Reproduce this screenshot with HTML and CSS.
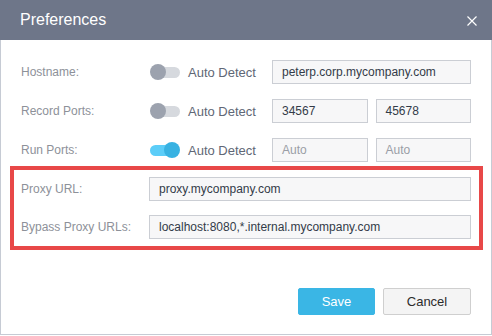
FILE: index.html
```html
<!DOCTYPE html>
<html>
<head>
<meta charset="utf-8">
<link rel="stylesheet" href="styles.css">
</head>
<body>
<div class="dialog">
  <div class="header">
    <span class="title">Preferences</span>
    <span class="close"><svg width="10" height="10" viewBox="0 0 10 10"><path d="M0.5 0.5L9.5 9.5M9.5 0.5L0.5 9.5" stroke="#fff" stroke-width="1.2" fill="none"/></svg></span>
  </div>
  <div class="body">
    <div class="row">
      <span class="label">Hostname:</span>
      <span class="toggle"><span class="track"></span><span class="knob"></span></span>
      <span class="auto">Auto Detect</span>
      <div class="fields"><div class="field">peterp.corp.mycompany.com</div></div>
    </div>
    <div class="row">
      <span class="label">Record Ports:</span>
      <span class="toggle"><span class="track"></span><span class="knob"></span></span>
      <span class="auto">Auto Detect</span>
      <div class="fields"><div class="field">34567</div><div class="field">45678</div></div>
    </div>
    <div class="row">
      <span class="label">Run Ports:</span>
      <span class="toggle on"><span class="track"></span><span class="knob"></span></span>
      <span class="auto">Auto Detect</span>
      <div class="fields"><div class="field placeholder">Auto</div><div class="field placeholder">Auto</div></div>
    </div>
    <div class="highlight">
      <div class="row proxy">
        <span class="label">Proxy URL:</span>
        <div class="fields"><div class="field">proxy.mycompany.com</div></div>
      </div>
      <div class="row proxy">
        <span class="label">Bypass Proxy URLs:</span>
        <div class="fields"><div class="field">localhost:8080,*.internal.mycompany.com</div></div>
      </div>
    </div>
    <div class="actions">
      <button class="btn save">Save</button>
      <button class="btn cancel">Cancel</button>
    </div>
  </div>
</div>
</body>
</html>
```

FILE: styles.css
```css
* { box-sizing: border-box; }
html, body { margin: 0; padding: 0; background: #fff; }
body { font-family: "Liberation Sans", Arial, sans-serif; }

.dialog { width: 492px; }

.header {
  height: 40px;
  background: #6e7689;
  display: flex;
  align-items: center;
  justify-content: space-between;
  padding: 0 15px 0 20px;
}
.title { color: #fff; font-size: 16px; }
.close { display: flex; width: 10px; height: 10px; margin-top: 1px; }

.body {
  border: 1px solid #c6cbd4;
  border-top: none;
  padding: 20px 20px 19px 20px;
  display: flex;
  flex-direction: column;
  gap: 15px;
}

.row { display: flex; align-items: center; height: 24px; }
.label { width: 129px; font-size: 12px; color: #8d9199; }
.toggle { position: relative; width: 30px; height: 16px; display: block; }
.track {
  position: absolute; left: 2px; right: 0; top: 3px; height: 11px;
  border-radius: 6px; background: #d6d9de;
}
.knob {
  position: absolute; left: 0; top: 0; width: 16px; height: 16px;
  border-radius: 50%; background: #9ca2ae;
}
.toggle.on .track { background: #5ccdf8; left: 0; right: 2px; }
.toggle.on .knob { left: 14px; background: #38b2e2; }
.auto { width: 84px; margin-left: 8px; font-size: 13px; color: #606776; }

.fields { flex: 1; display: flex; gap: 8px; height: 24px; }
.field {
  flex: 1;
  border: 1px solid #cbced4;
  background: #f7f7f8;
  font-size: 12px;
  color: #333b48;
  padding: 0 9px;
  line-height: 22px;
  white-space: nowrap;
}
.field.placeholder { color: #9a9ea6; }

.highlight {
  margin: -11px -12px 0 -11px;
  border: 4px solid #e84848;
  padding: 7px 8px 7px 7px;
  display: flex;
  flex-direction: column;
  gap: 14px;
}
.row.proxy .label { width: 128px; }

.actions {
  display: flex;
  justify-content: flex-end;
  gap: 8px;
  margin-top: 23px;
}
.btn {
  height: 27px;
  font-family: "Liberation Sans", Arial, sans-serif;
  font-size: 13px;
  border-radius: 2px;
}
.save { width: 77px; background: #3ab6e5; color: #fff; border: 1px solid #3ab6e5; }
.cancel { width: 88px; background: #f4f4f4; color: #2c2c2c; border: 1px solid #cfcfcf; }
```
